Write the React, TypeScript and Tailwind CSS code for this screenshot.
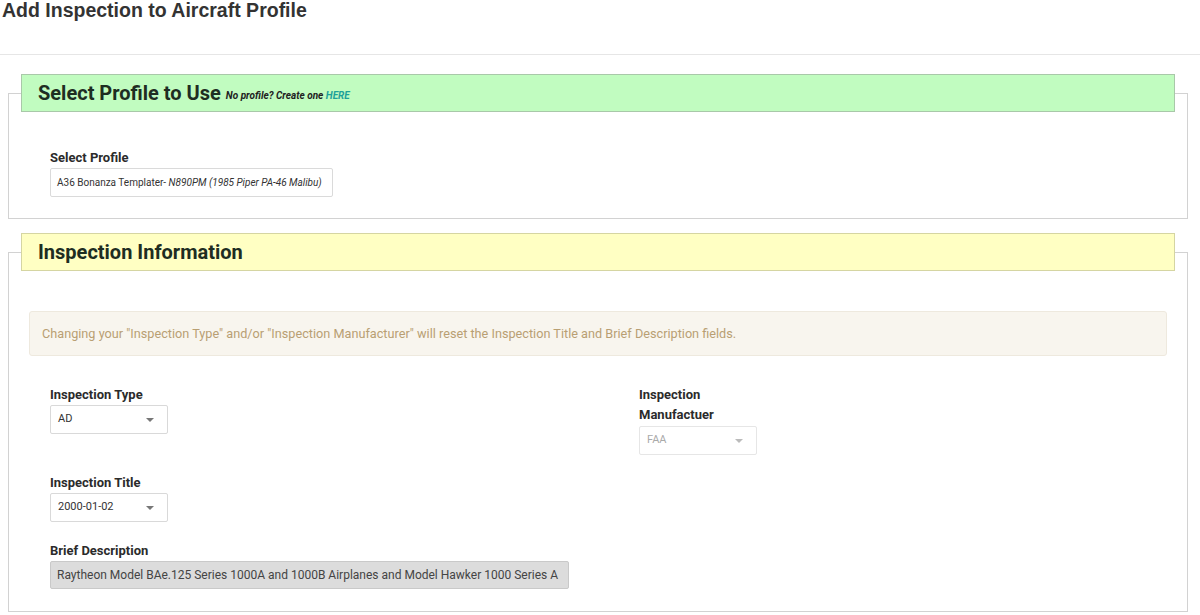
import { ReactNode } from 'react'

const font = { fontFamily: 'Roboto, "Noto Sans", sans-serif' }

function Caret({ light }: { light?: boolean }) {
  return (
    <span
      className={`ml-auto w-0 h-0 border-l-[4px] border-r-[4px] border-t-[4px] border-l-transparent border-r-transparent ${
        light ? 'border-t-[#bbb]' : 'border-t-[#777]'
      }`}
    />
  )
}

function FakeSelect({ value, disabled }: { value: string; disabled?: boolean }) {
  return (
    <div
      className={`w-[118px] h-[29px] rounded-[2px] border flex items-center pl-[7px] pr-[13px] text-[11px] ${
        disabled ? 'border-[#e6e6e6] text-[#aaa]' : 'border-[#d9d9d9] text-[#333]'
      }`}
    >
      <span>{value}</span>
      <Caret light={disabled} />
    </div>
  )
}

function Label({ children, className = '' }: { children: ReactNode; className?: string }) {
  return <div className={`text-[13px] leading-[20px] font-bold text-[#2b2b2b] ${className}`}>{children}</div>
}

function Section({ title, tone, extra, children, className = '' }: {
  title: string; tone: 'green' | 'yellow'; extra?: ReactNode; children: ReactNode; className?: string
}) {
  const legendTone = tone === 'green'
    ? 'bg-[#c1fcc0] border-[#a9c8a9]'
    : 'bg-[#ffffc3] border-[#d5d5a2]'
  return (
    <fieldset className={`ml-[8px] w-[1180px] border border-[#d2d2d2] px-[12px] ${className}`}>
      <legend className={`w-[1154px] h-[38px] border ${legendTone} pl-[16px] flex items-center`}>
        <span className="text-[20px] font-bold text-[#1e2d22]">{title}</span>
        {extra}
      </legend>
      {children}
    </fieldset>
  )
}

export default function App() {
  return (
    <div className="w-[1200px] h-[615px] bg-white overflow-hidden" style={font}>
      {/* Header */}
      <div className="h-[55px] border-b border-[#e6e6e6] pl-[2px]">
        <h1
          className="text-[19.5px] leading-[20px] font-bold text-[#333]"
          style={{ fontFamily: '"Liberation Sans", Arial, sans-serif' }}
        >
          Add Inspection to Aircraft Profile
        </h1>
      </div>

      {/* Profile */}
      <Section
        title="Select Profile to Use"
        tone="green"
        className="mt-[19px] pb-[21px]"
        extra={
          <span className="ml-[5px] mt-[4px] text-[10px] italic font-bold text-[#222]">
            No profile? Create one <span className="text-[#1ea19a]">HERE</span>
          </span>
        }
      >
        <div className="pt-[36px] pl-[29px]">
          <Label>Select Profile</Label>
          <div className="w-[283px] h-[29px] border border-[#dadada] rounded-[2px] flex items-center pl-[6px] text-[10px] text-[#333] overflow-hidden whitespace-nowrap">
            A36 Bonanza Templater-&nbsp;<span className="italic">N890PM (1985 Piper PA-46 Malibu)</span>
          </div>
        </div>
      </Section>

      {/* Inspection */}
      <Section title="Inspection Information" tone="yellow" className="mt-[14px] pb-[22px]">
        <div className="pt-[40px] pl-[8px]">
          <div className="w-[1138px] h-[45px] rounded-[3px] bg-[#f8f5ee] border border-[#eee9de] flex items-center pl-[12px] text-[12.7px] text-[#b99f73]">
            Changing your "Inspection Type" and/or "Inspection Manufacturer" will reset the Inspection Title and Brief Description fields.
          </div>
        </div>

        <div className="pl-[29px] pt-[29px] flex">
          <div className="w-[589px] flex flex-col">
            <Label>Inspection Type</Label>
            <FakeSelect value="AD" />
            <Label className="mt-[39px]">Inspection Title</Label>
            <FakeSelect value="2000-01-02" />
            <Label className="mt-[19px]">Brief Description</Label>
            <div className="w-[519px] h-[28px] rounded-[2px] bg-[#dcdcdc] border border-[#c9c9c9] flex items-center pl-[6px] text-[12px] text-[#444] overflow-hidden whitespace-nowrap">
              Raytheon Model BAe.125 Series 1000A and 1000B Airplanes and Model Hawker 1000 Series A
            </div>
          </div>
          <div className="flex flex-col">
            <Label className="w-[118px] mb-[1px]">Inspection Manufactuer</Label>
            <FakeSelect value="FAA" disabled />
          </div>
        </div>
      </Section>
    </div>
  )
}
